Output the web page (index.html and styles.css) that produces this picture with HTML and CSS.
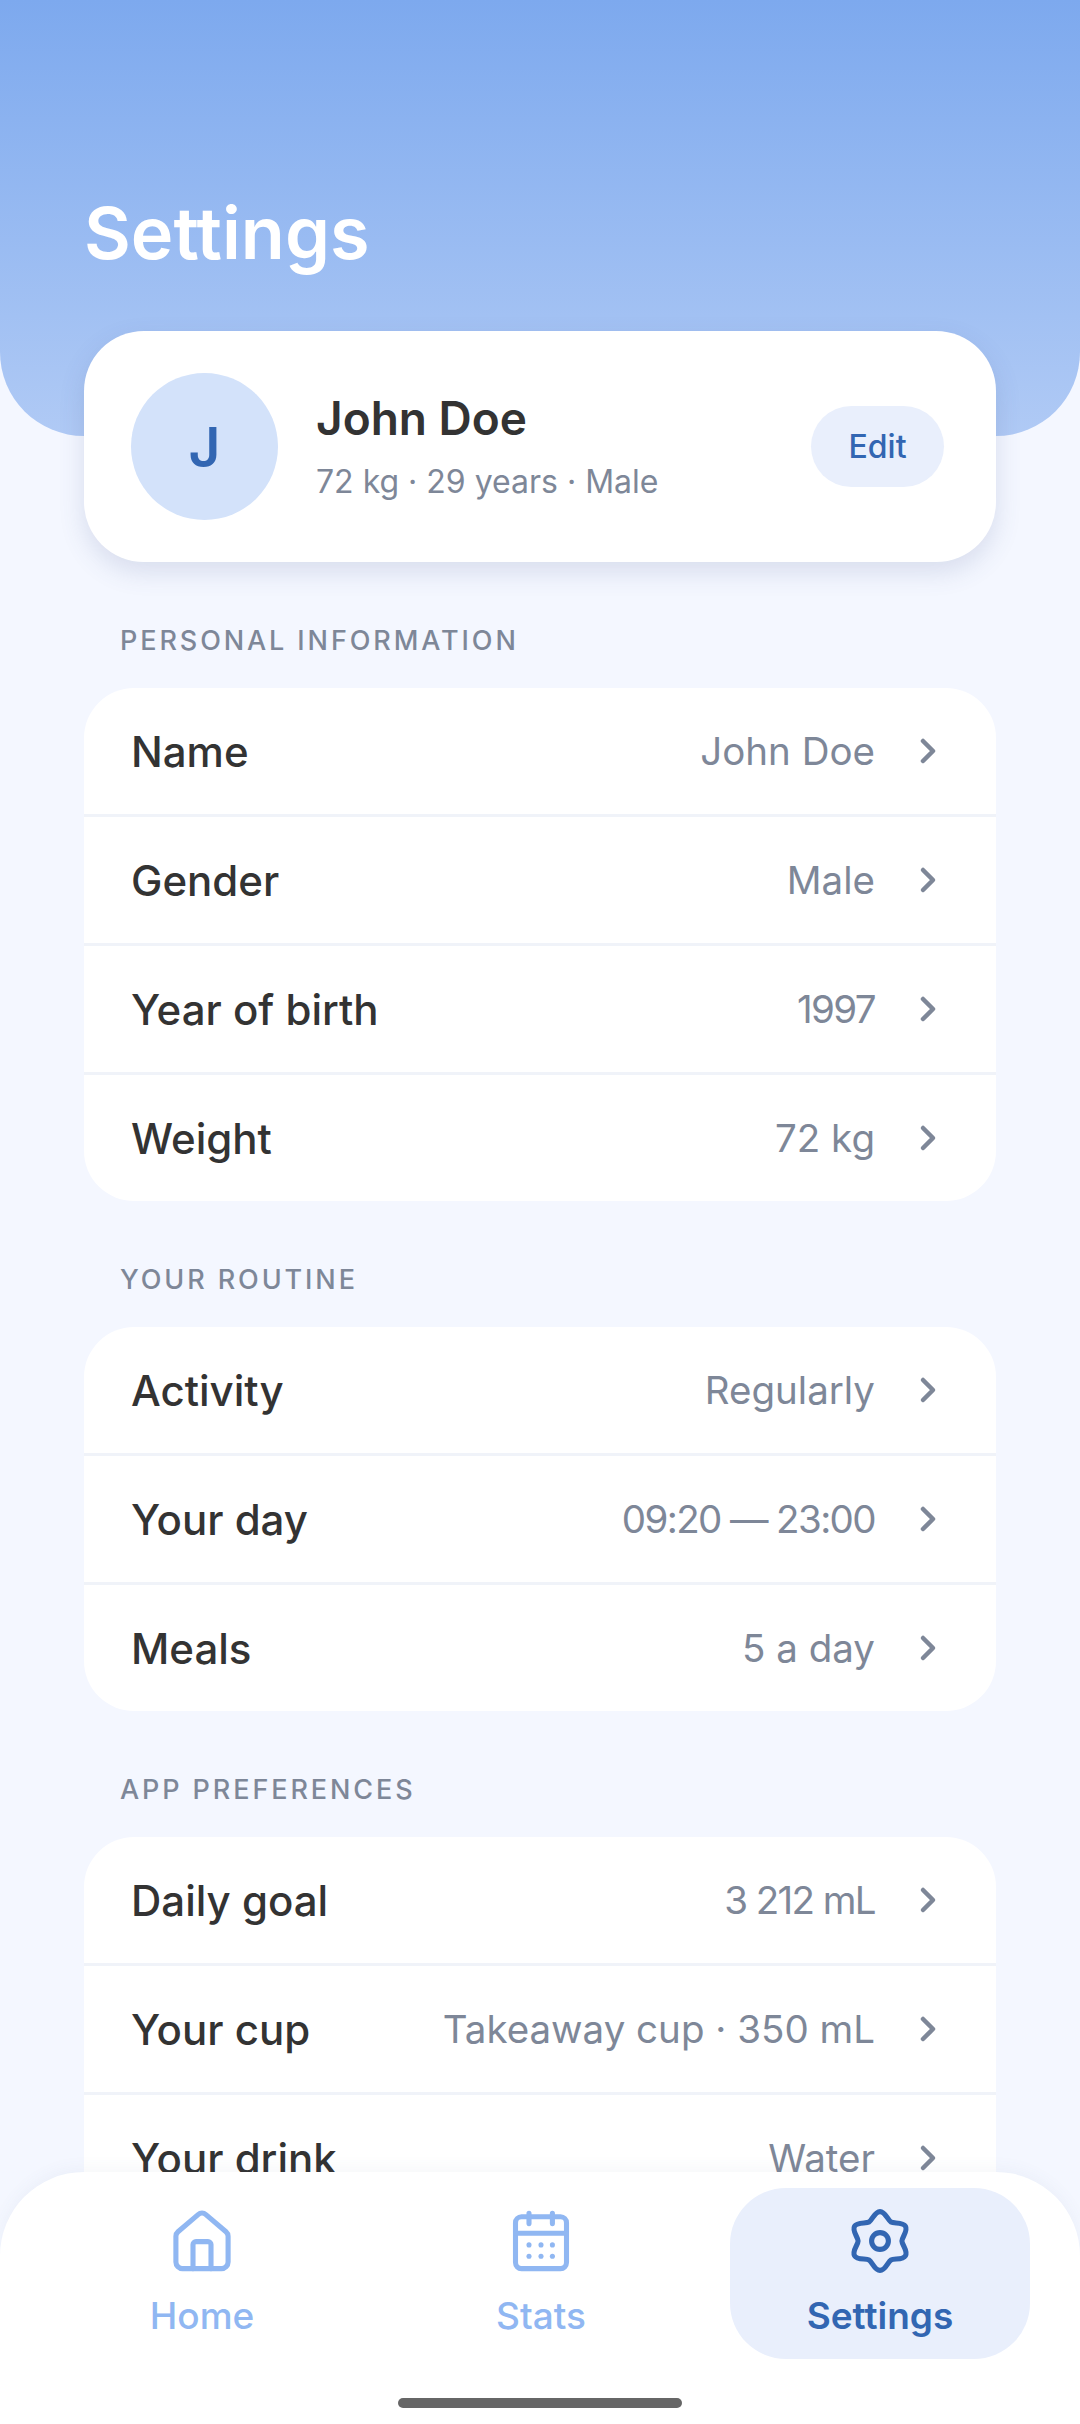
FILE: index.html

```html
<!DOCTYPE html>
<html lang="en">
<head>
    <meta charset="UTF-8">
    <meta name="viewport" content="width=device-width, initial-scale=1.0">
    <title>Settings</title>
    <link rel="stylesheet" href="styles.css">
</head>
<body>
    <div class="screen">
        <header class="header">
            <h1>Settings</h1>
        </header>

        <main class="content">
            <div class="profile">
                <div class="avatar">J</div>
                <div class="profile-text">
                    <div class="profile-name">John Doe</div>
                    <div class="profile-meta">72 kg · 29 years · Male</div>
                </div>
                <div class="edit">Edit</div>
            </div>

            <h2 class="section-title">PERSONAL INFORMATION</h2>
            <div class="list">
                <div class="row"><span class="label">Name</span><span class="value">John Doe</span><svg class="chevron" viewBox="0 0 20 28"><path d="M5 4l10 10L5 24"/></svg></div>
                <div class="row"><span class="label">Gender</span><span class="value">Male</span><svg class="chevron" viewBox="0 0 20 28"><path d="M5 4l10 10L5 24"/></svg></div>
                <div class="row"><span class="label">Year of birth</span><span class="value num">1997</span><svg class="chevron" viewBox="0 0 20 28"><path d="M5 4l10 10L5 24"/></svg></div>
                <div class="row"><span class="label">Weight</span><span class="value">72 kg</span><svg class="chevron" viewBox="0 0 20 28"><path d="M5 4l10 10L5 24"/></svg></div>
            </div>

            <h2 class="section-title">YOUR ROUTINE</h2>
            <div class="list">
                <div class="row"><span class="label">Activity</span><span class="value">Regularly</span><svg class="chevron" viewBox="0 0 20 28"><path d="M5 4l10 10L5 24"/></svg></div>
                <div class="row"><span class="label">Your day</span><span class="value num">09:20 — 23:00</span><svg class="chevron" viewBox="0 0 20 28"><path d="M5 4l10 10L5 24"/></svg></div>
                <div class="row"><span class="label">Meals</span><span class="value">5 a day</span><svg class="chevron" viewBox="0 0 20 28"><path d="M5 4l10 10L5 24"/></svg></div>
            </div>

            <h2 class="section-title">APP PREFERENCES</h2>
            <div class="list">
                <div class="row"><span class="label">Daily goal</span><span class="value num">3 212 mL</span><svg class="chevron" viewBox="0 0 20 28"><path d="M5 4l10 10L5 24"/></svg></div>
                <div class="row"><span class="label">Your cup</span><span class="value">Takeaway cup · 350 mL</span><svg class="chevron" viewBox="0 0 20 28"><path d="M5 4l10 10L5 24"/></svg></div>
                <div class="row"><span class="label">Your drink</span><span class="value">Water</span><svg class="chevron" viewBox="0 0 20 28"><path d="M5 4l10 10L5 24"/></svg></div>
            </div>
        </main>

        <nav class="tabbar">
            <div class="tabs">
                <div class="tab">
                    <svg class="tab-icon" viewBox="0 0 24 24">
                        <path d="M10.7 3.2a2 2 0 0 1 2.6 0l6.7 5.7a2 2 0 0 1 .7 1.5v8.6a2.2 2.2 0 0 1-2.2 2.2H5.5a2.2 2.2 0 0 1-2.2-2.2v-8.6a2 2 0 0 1 .7-1.5z"/>
                        <path d="M9 21.2v-8a1 1 0 0 1 1-1h4a1 1 0 0 1 1 1v8"/>
                    </svg>
                    <span>Home</span>
                </div>
                <div class="tab">
                    <svg class="tab-icon" viewBox="0 0 24 24">
                        <rect x="3.5" y="3.9" width="17" height="17.3" rx="2"/>
                        <path d="M3.5 9.4h17M8 2.8v3.4M15.8 2.8v3.4"/>
                        <g class="dots">
                            <circle cx="8" cy="13.3" r=".85"/><circle cx="12" cy="13.3" r=".85"/><circle cx="15.8" cy="13.3" r=".85"/>
                            <circle cx="8" cy="17.1" r=".85"/><circle cx="12" cy="17.1" r=".85"/><circle cx="15.8" cy="17.1" r=".85"/>
                        </g>
                    </svg>
                    <span>Stats</span>
                </div>
                <div class="tab active">
                    <svg class="tab-icon" viewBox="0 0 24 24">
                        <path d="M12 2.2C13.8 2.2 14.61 5.08 15.65 5.68C16.69 6.28 19.59 5.54 20.49 7.1C21.39 8.66 19.3 10.8 19.3 12C19.3 13.2 21.39 15.34 20.49 16.9C19.59 18.46 16.69 17.72 15.65 18.32C14.61 18.92 13.8 21.8 12 21.8C10.2 21.8 9.39 18.92 8.35 18.32C7.31 17.72 4.41 18.46 3.51 16.9C2.61 15.34 4.7 13.2 4.7 12C4.7 10.8 2.61 8.66 3.51 7.1C4.41 5.54 7.31 6.28 8.35 5.68C9.39 5.08 10.2 2.2 12 2.2Z"/>
                        <circle cx="12" cy="12" r="2.8"/>
                    </svg>
                    <span>Settings</span>
                </div>
            </div>
            <div class="home-bar"></div>
        </nav>
    </div>
</body>
</html>
```

FILE: styles.css

```css
* { box-sizing: border-box; }
html, body { margin: 0; padding: 0; }
body { font-family: "Inter", "Liberation Sans", sans-serif; background: #f4f7ff; color: #333; }

.screen { position: relative; width: 1080px; height: 2424px; overflow: hidden; background: #f4f7ff; }

.header { height: 436px; padding: 193px 84px 0; background: linear-gradient(180deg, #7da9ee 0%, #b0caf5 100%); border-radius: 0 0 84px 84px; }
.header h1 { margin: 0; font-size: 72px; line-height: 80px; font-weight: 600; color: #fff; }

.content { padding: 0 84px; margin-top: -105px; }

.profile { display: flex; align-items: center; height: 231px; padding: 0 52px 0 47px; background: #fff; border-radius: 60px; box-shadow: 0 10px 26px rgba(70, 90, 140, 0.16); }
.avatar { display: flex; align-items: center; justify-content: center; flex: none; width: 147px; height: 147px; border-radius: 50%; background: #d3e2fa; color: #3266b2; font-size: 55px; font-weight: 600; }
.profile-text { flex: 1; margin-left: 38px; }
.profile-name { font-size: 46px; line-height: 56px; font-weight: 600; }
.profile-meta { margin-top: 14px; font-size: 32px; line-height: 44px; color: #7e8798; }
.edit { display: flex; align-items: center; justify-content: center; width: 133px; height: 81px; border-radius: 41px; background: #e9effc; color: #3266b2; font-size: 32px; font-weight: 500; }

.section-title { margin: 62px 0 0 36px; font-size: 27px; line-height: 34px; font-weight: 500; letter-spacing: 2.9px; color: #7e8798; }

.list { margin-top: 30px; background: #fff; border-radius: 50px; overflow: hidden; }
.row { display: flex; align-items: center; height: 129px; padding: 0 58px 0 47px; border-bottom: 3px solid #f0f3f9; }
.row:last-child { border-bottom: none; height: 126px; }
.label { flex: 1; font-size: 42px; font-weight: 450; }
.value { font-size: 38.5px; color: #7e8798; }
.value.num { letter-spacing: -1.6px; }
.chevron { flex: none; width: 20px; height: 28px; margin-left: 43px; fill: none; stroke: #7e8798; stroke-width: 4.5; stroke-linecap: round; stroke-linejoin: round; }

.tabbar { position: absolute; left: 0; right: 0; bottom: 0; height: 252px; background: #fff; border-radius: 84px 84px 0 0; box-shadow: 0 -4px 16px rgba(70, 90, 140, 0.05); }
.tabs { display: flex; gap: 39px; height: 186px; padding: 16px 50px 0 52px; }
.tab { display: flex; flex-direction: column; align-items: center; flex: 1 1 0; min-width: 0; height: 171px; padding-top: 17px; border-radius: 56px; color: #90b7f2; font-size: 37px; font-weight: 500; }
.tab.active { color: #3266b2; background: #e9effc; font-weight: 600; }
.tab span { margin-top: 17px; line-height: 44px; }
.tab-icon { width: 72px; height: 72px; fill: none; stroke: currentColor; stroke-width: 1.7; stroke-linecap: round; stroke-linejoin: round; }
.tab-icon .dots { fill: currentColor; stroke: none; }

.home-bar { width: 284px; height: 10px; margin: 40px auto 0; border-radius: 5px; background: #666; }
```
